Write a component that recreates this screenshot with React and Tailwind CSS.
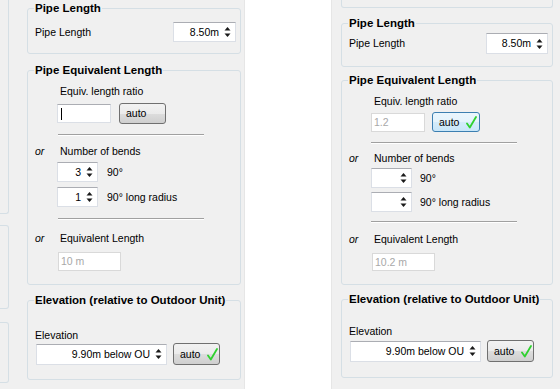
import React from "react";

const Arrows = () => (
  <svg width="7" height="12" viewBox="0 0 7 12" className="shrink-0">
    <polygon points="0.5,4.5 3.5,1 6.5,4.5" fill="#1a1a1a" />
    <polygon points="0.5,7.5 3.5,11 6.5,7.5" fill="#1a1a1a" />
  </svg>
);

const Check = () => (
  <svg width="11" height="13" viewBox="0 0 11 13" className="shrink-0">
    <path d="M1 7.5 L3.8 11.5 L10 1" fill="none" stroke="#2fd12f" strokeWidth="1.8" strokeLinecap="round" strokeLinejoin="round" />
  </svg>
);

const Spin = ({ value, className }) => (
  <div className={`flex items-center justify-end gap-[5px] bg-white border border-[#dbdfe6] border-t-[#abadb3] pr-[4px] text-[10.5px] leading-[13px] text-black whitespace-nowrap ${className}`}>
    <span>{value}</span>
    <Arrows />
  </div>
);

const AutoBtn = ({ check, focus, className }) => (
  <div
    className={`flex items-center rounded-[3px] border pl-[6px] pr-[5px] gap-[7px] text-[10.5px] leading-[13px] text-black ${
      focus
        ? "border-[#3c7fb1] bg-[linear-gradient(#eaf6fd_0%,#e4f3fc_50%,#d4ecfa_51%,#c8e6f9_100%)]"
        : "border-[#707070] bg-[linear-gradient(#f2f2f2_0%,#ebebeb_50%,#dddddd_51%,#cfcfcf_100%)]"
    } ${className}`}
  >
    <span>auto</span>
    {check ? <Check /> : null}
  </div>
);

const Sep = ({ className }) => (
  <div className={`border-t border-b border-t-[#a0a0a0] border-b-white ${className}`} />
);

const Group = ({ title, className, children }) => (
  <fieldset className={`border border-[#d5dfe5] rounded-[3px] pl-[7px] pr-[4px] ${className}`}>
    <legend className="px-[1px] -ml-[1px] text-[11.5px] leading-[14px] font-bold text-black whitespace-nowrap">{title}</legend>
    {children}
  </fieldset>
);

const Label = ({ children, className }) => (
  <div className={`text-[10.5px] leading-[13px] text-black whitespace-nowrap ${className}`}>{children}</div>
);

const OrRow = ({ text, className }) => (
  <div className={`flex text-[10.5px] leading-[13px] text-black ${className}`}>
    <span className="w-[25px] italic">or</span>
    <span>{text}</span>
  </div>
);

const Disabled = ({ value, className }) => (
  <div className={`bg-white border border-[#d9d9d9] flex items-center pl-[2px] text-[10.5px] leading-[13px] text-[#a8a8a8] ${className}`}>
    {value}
  </div>
);

export default function App() {
  return (
    <div className="flex w-[560px] h-[389px] bg-white overflow-hidden font-['Liberation_Sans',Arial,sans-serif]">
      {/* Left panel */}
      <div className="w-[245px] h-full bg-[#f0f0f0] border-r border-[#e6e6e6] flex">
        <div className="w-[9px] flex flex-col">
          <div className="h-[214px] border-r border-b border-[#d5dfe5] rounded-br-[3px]" />
          <div className="mt-[11px] h-[84px] border border-l-0 border-[#d5dfe5] rounded-r-[3px]" />
          <div className="mt-[13px] h-[61px] border border-l-0 border-[#d5dfe5] rounded-r-[3px]" />
        </div>
        <div className="ml-[18px] w-[214px] pt-[1px] flex flex-col">
          <Group title="Pipe Length" className="pb-[11px]">
            <div className="mt-[7px] flex items-center justify-between">
              <Label>Pipe Length</Label>
              <Spin value="8.50m" className="w-[63px] h-[20px]" />
            </div>
          </Group>

          <Group title="Pipe Equivalent Length" className="mt-[9px] pb-[13px]">
            <Label className="mt-[8px] ml-[25px]">Equiv. length ratio</Label>
            <div className="mt-[5px] flex items-center h-[21px]">
              <div className="ml-[22px] w-[54px] h-[19px] bg-white border border-[#dbdfe6] border-t-[#abadb3] flex items-center pl-[3px]">
                <div className="w-[1px] h-[12px] bg-black" />
              </div>
              <AutoBtn className="ml-[8px] w-[47px] h-[21px]" />
            </div>
            <Sep className="mt-[10px] ml-[23px] w-[146px]" />
            <OrRow text="Number of bends" className="mt-[9px]" />
            <div className="mt-[4px] flex items-center">
              <Spin value="3" className="ml-[22px] w-[41px] h-[20px]" />
              <Label className="ml-[9px]">90°</Label>
            </div>
            <div className="mt-[5px] flex items-center">
              <Spin value="1" className="ml-[22px] w-[41px] h-[20px]" />
              <Label className="ml-[9px]">90° long radius</Label>
            </div>
            <Sep className="mt-[11px] ml-[23px] w-[146px]" />
            <OrRow text="Equivalent Length" className="mt-[12px]" />
            <Disabled value="10 m" className="mt-[7px] ml-[23px] w-[63px] h-[19px]" />
          </Group>

          <Group title="Elevation (relative to Outdoor Unit)" className="mt-[8px] pb-[14px]">
            <Label className="mt-[22px]">Elevation</Label>
            <div className="mt-[1px] flex items-center h-[22px]">
              <Spin value="9.90m below OU" className="ml-[1px] w-[131px] h-[21px]" />
              <AutoBtn check className="ml-[6px] w-[47px] h-[22px]" />
            </div>
          </Group>
        </div>
      </div>

      <div className="w-[86px] h-full" />

      {/* Right panel */}
      <div className="flex-1 h-full bg-[#f0f0f0] border-l border-[#e6e6e6] pl-[9px]">
        <div className="w-[212px] flex flex-col">
          <div className="h-[8px] border border-t-0 border-[#d5dfe5] rounded-b-[3px]" />

          <Group title="Pipe Length" className="mt-[8px] pb-[12px]">
            <div className="mt-[3px] flex items-center justify-between">
              <Label>Pipe Length</Label>
              <Spin value="8.50m" className="w-[62px] h-[21px]" />
            </div>
          </Group>

          <Group title="Pipe Equivalent Length" className="mt-[6px] pb-[13px]">
            <Label className="mt-[8px] ml-[25px]">Equiv. length ratio</Label>
            <div className="mt-[4px] flex items-center h-[20px]">
              <Disabled value="1.2" className="ml-[22px] w-[54px] h-[19px]" />
              <AutoBtn check focus className="ml-[7px] w-[48px] h-[20px]" />
            </div>
            <Sep className="mt-[10px] ml-[22px] w-[146px]" />
            <OrRow text="Number of bends" className="mt-[8px]" />
            <div className="mt-[3px] flex items-center">
              <Spin value="" className="ml-[22px] w-[41px] h-[20px]" />
              <Label className="ml-[8px]">90°</Label>
            </div>
            <div className="mt-[4px] flex items-center">
              <Spin value="" className="ml-[22px] w-[41px] h-[20px]" />
              <Label className="ml-[8px]">90° long radius</Label>
            </div>
            <Sep className="mt-[9px] ml-[22px] w-[146px]" />
            <OrRow text="Equivalent Length" className="mt-[10px]" />
            <Disabled value="10.2 m" className="mt-[7px] ml-[23px] w-[63px] h-[18px]" />
          </Group>

          <Group title="Elevation (relative to Outdoor Unit)" className="mt-[7px] pb-[15px]">
            <Label className="mt-[19px]">Elevation</Label>
            <div className="mt-[2px] flex items-center h-[22px]">
              <Spin value="9.90m below OU" className="ml-[1px] w-[131px] h-[21px]" />
              <AutoBtn check className="ml-[6px] w-[47px] h-[22px]" />
            </div>
          </Group>
        </div>
      </div>
    </div>
  );
}
